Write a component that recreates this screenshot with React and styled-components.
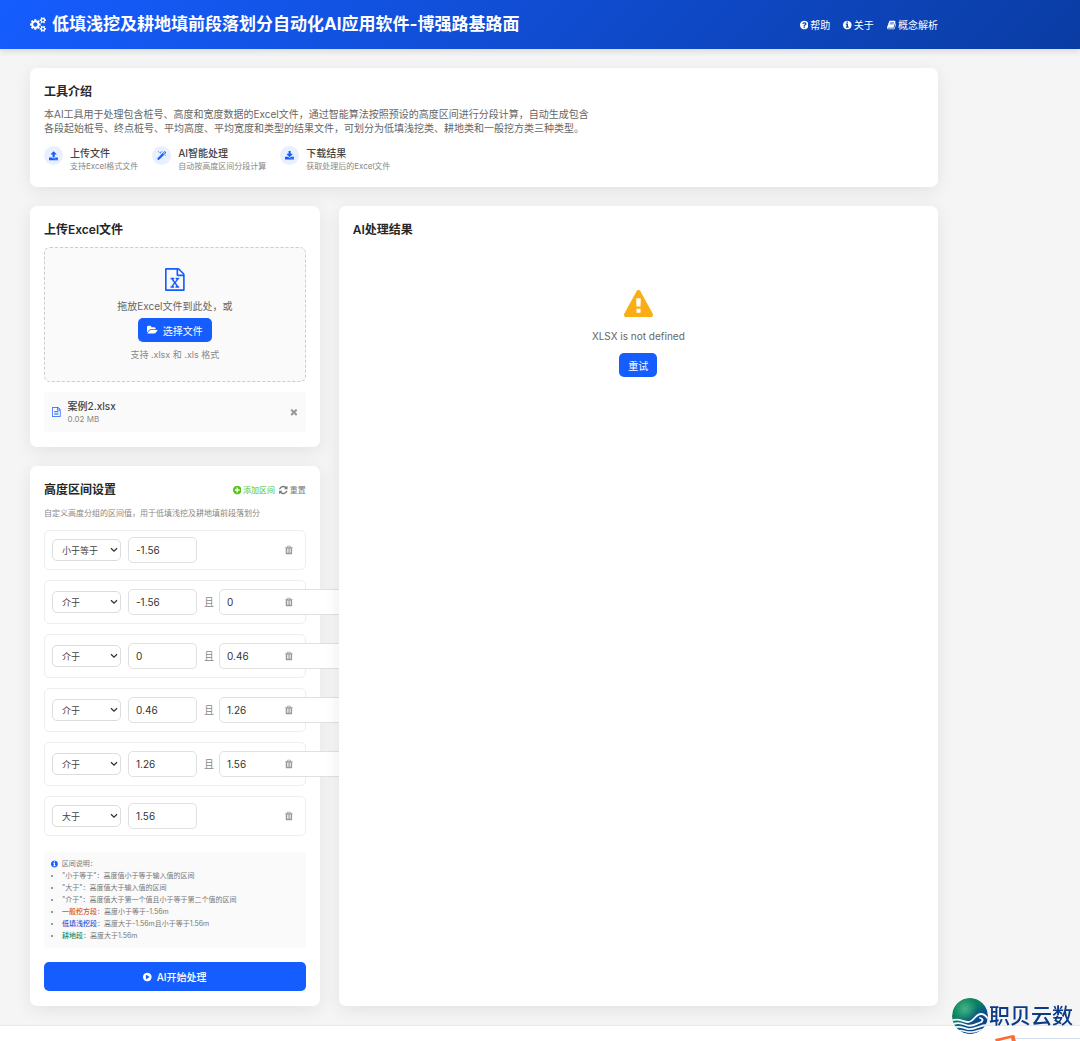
import React, { useState } from "react";
import styled, { createGlobalStyle } from "styled-components";

// アイコンのパス（viewBoxの左端, 幅, パス）
const DISC =
  "q0 209-103 385.5t-279.5 279.5-385.5 103-385.5-103-279.5-279.5-103-385.5 103-385.5 279.5-279.5 385.5-103 385.5 103 279.5 279.5 103 385.5z";
const FILE =
  "M1596 380q28 28 48 76t20 88v1152q0 40-28 68t-68 28h-1344q-40 0-68-28t-28-68v-1600q0-40 28-68t68-28h896q40 0 88 20t76 48zm-444-244v376h376q-10-29-22-41l-313-313q-12-12-41-22zm384 1528v-1024h-416q-40 0-68-28t-28-68v-416h-768v1536h1280z";
const SMALL_COG =
  "v140q0 16-149 31-12 27-30 52 51 113 51 138 0 4-4 7-122 71-124 71-8 0-46-47t-52-68q-20 2-30 2t-30-2q-14 21-52 68t-46 47q-2 0-124-71-4-3-4-7 0-25 51-138-18-25-30-52-149-15-149-31v-140q0-16 149-31 13-29 30-52-51-113-51-138 0-4 4-7 4-2 35-20t59-34 30-16q8 0 46 46.5t52 67.5q20-2 30-2t30 2q51-71 92-112l6-2q4 0 124 70 4 3 4 7 0 25-51 138 17 23 30 52 149 15 149 31z";

const ICONS = {
  cogs: [
    -64,
    1920,
    "M832 896q0-106-75-181t-181-75-181 75-75 181 75 181 181 75 181-75 75-181zm768 512q0-52-38-90t-90-38-90 38-38 90q0 53 37.5 90.5t90.5 37.5 90.5-37.5 37.5-90.5zm0-1024q0-52-38-90t-90-38-90 38-38 90q0 53 37.5 90.5t90.5 37.5 90.5-37.5 37.5-90.5zm-384 421v185q0 10-7 19.5t-16 10.5l-155 24q-11 35-32 76 34 48 90 115 7 11 7 20 0 12-7 19-23 30-82.5 89.5t-78.5 59.5q-11 0-21-7l-115-90q-37 19-77 31-11 108-23 155-7 24-30 24h-186q-11 0-20-7.5t-10-17.5l-23-153q-34-10-75-31l-118 89q-7 7-20 7-11 0-21-8-144-133-144-160 0-9 7-19 10-14 41-53t47-61q-23-44-35-82l-152-24q-10-1-17-9.5t-7-19.5v-185q0-10 7-19.5t16-10.5l155-24q11-35 32-76-34-48-90-115-7-11-7-20 0-12 7-20 22-30 82-89t79-59q11 0 21 7l115 90q34-18 77-32 11-108 23-154 7-24 30-24h186q11 0 20 7.5t10 17.5l23 153q34 10 75 31l118-89q8-7 20-7 11 0 21 8 144 133 144 160 0 8-7 19-12 16-42 54t-45 60q23 48 34 82l152 23q10 2 17 10.5t7 19.5zm640 533" +
      SMALL_COG +
      "m0-1024" +
      SMALL_COG,
  ],
  question: [
    128,
    1536,
    "M1024 1376v-192q0-14-9-23t-23-9h-192q-14 0-23 9t-9 23v192q0 14 9 23t23 9h192q14 0 23-9t9-23zm256-672q0-88-55.5-163t-138.5-116-170-41q-243 0-371 213-15 24 8 42l132 100q7 6 19 6 16 0 25-12 53-68 86-92 34-24 86-24 48 0 85.5 26t37.5 59q0 38-20 61t-68 45q-63 28-115.5 86.5t-52.5 125.5v36q0 14 9 23t23 9h192q14 0 23-9t9-23q0-19 21.5-49.5t54.5-49.5q32-18 49-28.5t46-35 44.5-48 28-60.5 12.5-81zm384 192" +
      DISC,
  ],
  info: [
    128,
    1536,
    "M1152 1376v-160q0-14-9-23t-23-9h-96v-512q0-14-9-23t-23-9h-320q-14 0-23 9t-9 23v160q0 14 9 23t23 9h96v320h-96q-14 0-23 9t-9 23v160q0 14 9 23t23 9h448q14 0 23-9t9-23zm-128-896v-160q0-14-9-23t-23-9h-192q-14 0-23 9t-9 23v160q0 14 9 23t23 9h192q14 0 23-9t9-23zm640 416" +
      DISC,
  ],
  plus: [
    128,
    1536,
    "M1344 960v-128q0-26-19-45t-45-19h-256v-256q0-26-19-45t-45-19h-128q-26 0-45 19t-19 45v256h-256q-26 0-45 19t-19 45v128q0 26 19 45t45 19h256v256q0 26 19 45t45 19h128q26 0 45-19t19-45v-256h256q26 0 45-19t19-45zm320-64" +
      DISC,
  ],
  play: [
    128,
    1536,
    "M896 128q209 0 385.5 103t279.5 279.5 103 385.5-103 385.5-279.5 279.5-385.5 103-385.5-103-279.5-279.5-103-385.5 103-385.5 279.5-279.5 385.5-103zm384 823q32-18 32-55t-32-55l-544-320q-31-19-64-1-32 19-32 56v640q0 37 32 56 16 8 32 8 17 0 32-9z",
  ],
  book: [
    64,
    1664,
    "M1703 478q40 57 18 129l-275 906q-19 64-76.5 107.5t-122.5 43.5h-923q-77 0-148.5-53.5t-99.5-131.5q-24-67-2-127 0-4 3-27t4-37q1-8-3-21.5t-3-19.5q2-11 8-21t16.5-23.5 16.5-23.5q23-38 45-91.5t30-91.5q3-10 .5-30t-.5-28q3-11 17-28t17-23q21-36 42-92t25-90q1-9-2.5-32t.5-28q4-13 22-30.5t22-22.5q19-26 42.5-84.5t27.5-96.5q1-8-3-25.5t-2-26.5q2-8 9-18t18-23 17-21q8-12 16.5-30.5t15-35 16-36 19.5-32 26.5-23.5 36-11.5 47.5 5.5l-1 3q38-9 51-9h761q74 0 114 56t18 130l-274 906q-36 119-71.5 153.5t-128.5 34.5h-869q-27 0-38 15-11 16-1 43 24 70 144 70h923q29 0 56-15.5t35-41.5l300-987q7-22 5-57 38 15 59 43zm-1064 2q-4 13 2 22.5t20 9.5h608q13 0 25.5-9.5t16.5-22.5l21-64q4-13-2-22.5t-20-9.5h-608q-13 0-25.5 9.5t-16.5 22.5zm-83 256q-4 13 2 22.5t20 9.5h608q13 0 25.5-9.5t16.5-22.5l21-64q4-13-2-22.5t-20-9.5h-608q-13 0-25.5 9.5t-16.5 22.5z",
  ],
  upload: [
    64,
    1664,
    "M1344 1472q0-26-19-45t-45-19-45 19-19 45 19 45 45 19 45-19 19-45zm256 0q0-26-19-45t-45-19-45 19-19 45 19 45 45 19 45-19 19-45zm128-224v320q0 40-28 68t-68 28h-1472q-40 0-68-28t-28-68v-320q0-40 28-68t68-28h427q21 56 70.5 92t110.5 36h256q61 0 110.5-36t70.5-92h427q40 0 68 28t28 68zm-325-648q-17 40-59 40h-256v448q0 26-19 45t-45 19h-256q-26 0-45-19t-19-45v-448h-256q-42 0-59-40-17-39 14-69l448-448q18-19 45-19t45 19l448 448q31 30 14 69z",
  ],
  magic: [
    64,
    1664,
    "M1254 581l293-293-107-107-293 293zm447-293q0 27-18 45l-1286 1286q-18 18-45 18t-45-18l-198-198q-18-18-18-45t18-45l1286-1286q18-18 45-18t45 18l198 198q18 18 18 45zm-1351-190l98 30-98 30-30 98-30-98-98-30 98-30 30-98zm350 162l196 60-196 60-60 196-60-196-196-60 196-60 60-196zm930 478l98 30-98 30-30 98-30-98-98-30 98-30 30-98zm-640-640l98 30-98 30-30 98-30-98-98-30 98-30 30-98z",
  ],
  download: [
    64,
    1664,
    "M1344 1344q0-26-19-45t-45-19-45 19-19 45 19 45 45 19 45-19 19-45zm256 0q0-26-19-45t-45-19-45 19-19 45 19 45 45 19 45-19 19-45zm128-224v320q0 40-28 68t-68 28h-1472q-40 0-68-28t-28-68v-320q0-40 28-68t68-28h465l135 136q58 56 136 56t136-56l136-136h464q40 0 68 28t28 68zm-325-569q17 41-14 70l-448 448q-18 19-45 19t-45-19l-448-448q-31-29-14-70 17-39 59-39h256v-448q0-26 19-45t45-19h256q26 0 45 19t19 45v448h256q42 0 59 39z",
  ],
  excel: [
    128,
    1536,
    FILE +
      "m-979-234v106h281v-106h-75l103-161q5-7 10-16.5t7.5-13.5 3.5-4h2q1 4 5 10 2 4 4.5 7.5t6 8 6.5 8.5l107 161h-76v106h291v-106h-68l-192-273 195-282h67v-107h-279v107h74l-103 159q-4 7-10 16.5t-9 13.5l-2 3h-2q-1-4-5-10-6-11-17-23l-106-159h76v-107h-290v107h68l189 272-194 283h-68z",
  ],
  fileText: [
    128,
    1536,
    FILE +
      "m-1024-864q0-14 9-23t23-9h704q14 0 23 9t9 23v64q0 14-9 23t-23 9h-704q-14 0-23-9t-9-23v-64zm736 224q14 0 23 9t9 23v64q0 14-9 23t-23 9h-704q-14 0-23-9t-9-23v-64q0-14 9-23t23-9h704zm0 256q14 0 23 9t9 23v64q0 14-9 23t-23 9h-704q-14 0-23-9t-9-23v-64q0-14 9-23t23-9h704z",
  ],
  folder: [
    -64,
    1920,
    "M1815 952q0 31-31 66l-336 396q-43 51-120.5 86.5t-143.5 35.5h-1088q-34 0-60.5-13t-26.5-43q0-31 31-66l336-396q43-51 120.5-86.5t143.5-35.5h1088q34 0 60.5 13t26.5 43zm-343-344v160h-832q-94 0-197 47.5t-164 119.5l-337 396-5 6q0-4-.5-12.5t-.5-12.5v-960q0-92 66-158t158-66h320q92 0 158 66t66 158v32h544q92 0 158 66t66 158z",
  ],
  times: [
    192,
    1408,
    "M1490 1322q0 40-28 68l-136 136q-28 28-68 28t-68-28l-294-294-294 294q-28 28-68 28t-68-28l-136-136q-28-28-28-68t28-68l294-294-294-294q-28-28-28-68t28-68l136-136q28-28 68-28t68 28l294 294 294-294q28-28 68-28t68 28l136 136q28 28 28 68t-28 68l-294 294 294 294q28 28 28 68z",
  ],
  refresh: [
    128,
    1536,
    "M1639 1056q0 5-1 7-64 268-268 434.5t-478 166.5q-146 0-282.5-55t-243.5-157l-129 129q-19 19-45 19t-45-19-19-45v-448q0-26 19-45t45-19h448q26 0 45 19t19 45-19 45l-137 137q71 66 161 102t187 36q134 0 250-65t186-179q11-17 53-117 8-23 30-23h192q13 0 22.5 9.5t9.5 22.5zm25-800v448q0 26-19 45t-45 19h-448q-26 0-45-19t-19-45 19-45l138-138q-148-137-349-137-134 0-250 65t-186 179q-11 17-53 117-8 23-30 23h-199q-13 0-22.5-9.5t-9.5-22.5v-7q65-268 270-434.5t480-166.5q146 0 284 55.5t245 156.5l130-129q19-19 45-19t45 19 19 45z",
  ],
  trash: [
    192,
    1408,
    "M704 1376v-704q0-14-9-23t-23-9h-64q-14 0-23 9t-9 23v704q0 14 9 23t23 9h64q14 0 23-9t9-23zm256 0v-704q0-14-9-23t-23-9h-64q-14 0-23 9t-9 23v704q0 14 9 23t23 9h64q14 0 23-9t9-23zm256 0v-704q0-14-9-23t-23-9h-64q-14 0-23 9t-9 23v704q0 14 9 23t23 9h64q14 0 23-9t9-23zm-544-992h448l-48-117q-7-9-17-11h-317q-10 2-17 11zm928 32v64q0 14-9 23t-23 9h-96v948q0 83-47 143.5t-113 60.5h-832q-66 0-113-58.5t-47-141.5v-952h-96q-14 0-23-9t-9-23v-64q0-14 9-23t23-9h309l70-167q15-37 54-63t79-26h320q40 0 79 26t54 63l70 167h309q14 0 23 9t9 23z",
  ],
  warning: [
    0,
    1792,
    "M1024 1375v-190q0-14-9.5-23.5t-22.5-9.5h-192q-13 0-22.5 9.5t-9.5 23.5v190q0 14 9.5 23.5t22.5 9.5h192q13 0 22.5-9.5t9.5-23.5zm-2-374l18-459q0-12-10-19-13-11-24-11h-220q-11 0-24 11-10 7-10 21l17 457q0 10 10 16.5t24 6.5h185q14 0 23.5-6.5t10.5-16.5zm-14-934l768 1408q35 63-2 126-17 29-46.5 46t-63.5 17h-1536q-34 0-63.5-17t-46.5-46q-37-63-2-126l768-1408q17-31 47-49t65-18 65 18 47 49z",
  ],
};

const Icon = ({ name, size = 10 }) => {
  const [left, width, path] = ICONS[name];
  return (
    <StyleIcon
      viewBox={`${left} 0 ${width} 1792`}
      width={(size * width) / 1792}
      height={size}
      aria-hidden="true"
    >
      <path d={path} />
    </StyleIcon>
  );
};

const features = [
  { icon: "upload", title: "上传文件", text: "支持Excel格式文件" },
  { icon: "magic", title: "AI智能处理", text: "自动按高度区间分段计算" },
  { icon: "download", title: "下载结果", text: "获取处理后的Excel文件" },
];

const defaultRanges = [
  { id: 1, type: "lte", value: "-1.56" },
  { id: 2, type: "between", value: "-1.56", value2: "0" },
  { id: 3, type: "between", value: "0", value2: "0.46" },
  { id: 4, type: "between", value: "0.46", value2: "1.26" },
  { id: 5, type: "between", value: "1.26", value2: "1.56" },
  { id: 6, type: "gt", value: "1.56" },
];

const RangeItem = ({ range, onChange, onDelete }) => {
  const edit = (key) => (e) => onChange({ ...range, [key]: e.target.value });
  const isBetween = range.type === "between";
  return (
    <StyleRange $tall={isBetween}>
      <StyleSelectBox>
        <StyleSelect aria-label="区间类型" value={range.type} onChange={edit("type")}>
          <option value="lte">小于等于</option>
          <option value="gt">大于</option>
          <option value="between">介于</option>
        </StyleSelect>
        <svg width="8" height="6" viewBox="0 0 8 6" aria-hidden="true">
          <path d="M1 1.2 L4 4.2 L7 1.2" fill="none" stroke="#333" strokeWidth="1.3" />
        </svg>
      </StyleSelectBox>
      <StyleInput aria-label="高度值" value={range.value} onChange={edit("value")} />
      <StyleSecond>
        {isBetween && (
          <>
            <span>且</span>
            <StyleInput
              $wide
              aria-label="第二个高度值"
              value={range.value2 || ""}
              onChange={edit("value2")}
            />
          </>
        )}
      </StyleSecond>
      <StyleIconButton aria-label="删除区间" onClick={onDelete}>
        <Icon name="trash" />
      </StyleIconButton>
    </StyleRange>
  );
};

const CompanyLogo = () => (
  <StyleLogo>
    <svg width="38" height="38" viewBox="0 0 38 38" aria-hidden="true">
      <defs>
        <linearGradient id="globe" x1="0.1" y1="0" x2="0.8" y2="1">
          <stop offset="0" stopColor="#0a8a50" />
          <stop offset="0.4" stopColor="#0b7f62" />
          <stop offset="0.65" stopColor="#0a4f8a" />
          <stop offset="1" stopColor="#0b3a86" />
        </linearGradient>
        <radialGradient id="shine" cx="0.36" cy="0.3" r="0.34">
          <stop offset="0" stopColor="#5cc79a" stopOpacity="0.7" />
          <stop offset="1" stopColor="#5cc79a" stopOpacity="0" />
        </radialGradient>
        <clipPath id="disc">
          <circle cx="19" cy="19" r="18" />
        </clipPath>
      </defs>
      <g clipPath="url(#disc)">
        <circle cx="19" cy="19" r="18" fill="url(#globe)" />
        <circle cx="19" cy="19" r="18" fill="url(#shine)" />
        <g fill="none" stroke="#f4f8fa" strokeLinecap="round">
          <path
            d="M0 24 C7 20 12 25 17 25 C23 25 24 17 30 17 C34 17 36 20 38 23"
            strokeWidth="1.8"
          />
          <path
            d="M29 21 C33 22 32 25 28 26 C23 28 20 30 15 28 C9 26 6 25 0 28"
            strokeWidth="1.8"
          />
          <path d="M2 31 C8 28 12 31 17 32 C24 33 28 28 37 28" strokeWidth="1.8" />
          <path d="M6 34 C11 32 15 36 21 35 C26 35 29 32 34 32" strokeWidth="1.6" />
        </g>
      </g>
    </svg>
    <span>职贝云数</span>
  </StyleLogo>
);

const App = () => {
  const [ranges, setRanges] = useState(defaultRanges);

  const addRange = () =>
    setRanges([...ranges, { id: Date.now(), type: "lte", value: "0" }]);

  return (
    <StylePage>
      <GlobalStyle />
      <StyleHeader>
        <StyleHeaderInner>
          <StyleBrand>
            <Icon name="cogs" size={15} />
            低填浅挖及耕地填前段落划分自动化AI应用软件-博强路基路面
          </StyleBrand>
          <StyleNav>
            <a href="#help">
              <Icon name="question" />
              帮助
            </a>
            <a href="#about">
              <Icon name="info" />
              关于
            </a>
            <a href="#concept">
              <Icon name="book" />
              概念解析
            </a>
          </StyleNav>
        </StyleHeaderInner>
      </StyleHeader>

      <StyleMain>
        <StyleCard>
          <StyleTitle>工具介绍</StyleTitle>
          <StyleIntro>
            本AI工具用于处理包含桩号、高度和宽度数据的Excel文件，通过智能算法按照预设的高度区间进行分段计算，自动生成包含各段起始桩号、终点桩号、平均高度、平均宽度和类型的结果文件，可划分为低填浅挖类、耕地类和一般挖方类三种类型。
          </StyleIntro>
          <StyleFeatures>
            {features.map((f) => (
              <StyleFeature key={f.title}>
                <StyleBubble>
                  <Icon name={f.icon} />
                </StyleBubble>
                <div>
                  <StyleName>{f.title}</StyleName>
                  <StyleSmall>{f.text}</StyleSmall>
                </div>
              </StyleFeature>
            ))}
          </StyleFeatures>
        </StyleCard>

        <StyleColumns>
          <StyleSide>
            <StyleCard>
              <StyleTitle>上传Excel文件</StyleTitle>
              <StyleDrop>
                <Icon name="excel" size={23} />
                <StyleDropText>拖放Excel文件到此处，或</StyleDropText>
                <StyleButton>
                  <Icon name="folder" />
                  选择文件
                </StyleButton>
                <StyleHint>支持 .xlsx 和 .xls 格式</StyleHint>
              </StyleDrop>
              <StyleFile>
                <Icon name="fileText" />
                <StyleFileInfo>
                  <StyleName>案例2.xlsx</StyleName>
                  <StyleSmall>0.02 MB</StyleSmall>
                </StyleFileInfo>
                <StyleIconButton aria-label="移除文件">
                  <Icon name="times" />
                </StyleIconButton>
              </StyleFile>
            </StyleCard>

            <StyleCard>
              <StyleTitleRow>
                <StyleTitle>高度区间设置</StyleTitle>
                <StyleActions>
                  <StyleTextButton $color="#52c41a" onClick={addRange}>
                    <Icon name="plus" />
                    添加区间
                  </StyleTextButton>
                  <StyleTextButton
                    $color="#7a7a7a"
                    onClick={() => setRanges(defaultRanges)}
                  >
                    <Icon name="refresh" />
                    重置
                  </StyleTextButton>
                </StyleActions>
              </StyleTitleRow>
              <StyleSmall>
                自定义高度分组的区间值，用于低填浅挖及耕地填前段落划分
              </StyleSmall>
              <StyleRanges>
                {ranges.map((range) => (
                  <RangeItem
                    key={range.id}
                    range={range}
                    onChange={(next) =>
                      setRanges(ranges.map((r) => (r.id === next.id ? next : r)))
                    }
                    onDelete={() =>
                      setRanges(ranges.filter((r) => r.id !== range.id))
                    }
                  />
                ))}
              </StyleRanges>
              <StyleNote>
                <StyleNoteTitle>
                  <Icon name="info" size={8} />
                  区间说明：
                </StyleNoteTitle>
                <ul>
                  <li>"小于等于"：高度值小于等于输入值的区间</li>
                  <li>"大于"：高度值大于输入值的区间</li>
                  <li>"介于"：高度值大于第一个值且小于等于第二个值的区间</li>
                  <li>
                    <StyleTag $color="#d4532b">一般挖方段</StyleTag>：高度小于等于-1.56m
                  </li>
                  <li>
                    <StyleTag $color="#3a55d6">低填浅挖段</StyleTag>
                    ：高度大于-1.56m且小于等于1.56m
                  </li>
                  <li>
                    <StyleTag $color="#2a8a5a">耕地段</StyleTag>：高度大于1.56m
                  </li>
                </ul>
              </StyleNote>
              <StyleSubmit>
                <Icon name="play" />
                AI开始处理
              </StyleSubmit>
            </StyleCard>
          </StyleSide>

          <StyleResult>
            <StyleTitle>AI处理结果</StyleTitle>
            <StyleError>
              <Icon name="warning" size={29} />
              <p>XLSX is not defined</p>
              <StyleButton>重试</StyleButton>
            </StyleError>
          </StyleResult>
        </StyleColumns>
      </StyleMain>

      <StyleFooter />
      <CompanyLogo />
      <StyleWidget aria-hidden="true">
        <svg width="24" height="8" viewBox="0 0 24 8">
          <path d="M1 5 L19 1 Q21 1 21 3 L22 8 H2 Z" fill="#ff6b35" />
          <path d="M5 7 L17 4 L18 8 H5 Z" fill="#fff" />
        </svg>
      </StyleWidget>
    </StylePage>
  );
};

const GlobalStyle = createGlobalStyle`
  * {
    box-sizing: border-box;
  }
  body {
    margin: 0;
    background: #f5f5f5;
    color: #262626;
    font-family: Inter, "Noto Sans CJK SC", sans-serif;
    font-size: 10px;
    line-height: 14px;
  }
  button, input, select {
    margin: 0;
    font-family: inherit;
  }
  p, ul {
    margin: 0;
    padding: 0;
  }
`;

const StyleIcon = styled.svg`
  display: block;
  flex: none;
  fill: currentColor;
`;

const StylePage = styled.div`
  display: flex;
  flex-direction: column;
  min-height: 100vh;
`;

const StyleHeader = styled.header`
  padding: 12px 0;
  background: linear-gradient(135deg, #165dff 0%, #0a3ca3 100%);
  box-shadow: 0 3px 6px rgba(0, 0, 0, 0.1);
  color: #fff;
`;

const StyleHeaderInner = styled.div`
  display: flex;
  align-items: center;
  justify-content: space-between;
  max-width: 968px;
  padding: 0 30px;
`;

const StyleBrand = styled.h1`
  display: flex;
  align-items: center;
  gap: 6px;
  margin: 0;
  font-size: 17px;
  font-weight: 700;
  line-height: 25px;
`;

const StyleNav = styled.nav`
  display: flex;
  gap: 13px;

  a {
    display: flex;
    align-items: center;
    gap: 2px;
    color: inherit;
    text-decoration: none;
  }
`;

const StyleMain = styled.main`
  display: flex;
  flex-direction: column;
  gap: 19px;
  max-width: 968px;
  padding: 19px 30px;
`;

const StyleCard = styled.section`
  padding: 15px 14px;
  border-radius: 7px;
  background: #fff;
  box-shadow: 0 4px 18px rgba(0, 0, 0, 0.08);
`;

const StyleTitle = styled.h2`
  margin: 0;
  font-size: 12px;
  font-weight: 600;
  line-height: 17px;
`;

const StyleIntro = styled.p`
  max-width: 550px;
  margin: 7px 0 11px;
  color: #666;
`;

const StyleFeatures = styled.div`
  display: flex;
  gap: 14px;
`;

const StyleFeature = styled.div`
  display: flex;
  align-items: flex-start;
  gap: 7px;
`;

const StyleBubble = styled.span`
  display: flex;
  align-items: center;
  justify-content: center;
  width: 19px;
  height: 19px;
  border-radius: 50%;
  background: #e8efff;
  color: #165dff;
`;

const StyleName = styled.p`
  color: #444;
  font-weight: 500;
`;

const StyleSmall = styled.p`
  color: #888;
  font-size: 8px;
  line-height: 12px;
`;

const StyleColumns = styled.div`
  display: grid;
  grid-template-columns: minmax(0, 29fr) minmax(0, 60fr);
  gap: 19px;
`;

const StyleSide = styled.div`
  display: flex;
  flex-direction: column;
  gap: 19px;
`;

// 左カラムからはみ出した入力欄より手前に出す
const StyleResult = styled(StyleCard)`
  position: relative;
  z-index: 2;
`;

const StyleDrop = styled.div`
  display: flex;
  flex-direction: column;
  align-items: center;
  margin: 9px 0 10px;
  padding: 20px 20px 19px;
  border: 1px dashed #ccc;
  border-radius: 6px;
  background: #fafafa;
  color: #165dff;
`;

const StyleDropText = styled.p`
  margin: 8px 0 5px;
  color: #666;
`;

const StyleHint = styled.p`
  margin-top: 6px;
  color: #888;
  font-size: 9px;
  line-height: 14px;
`;

const StyleButton = styled.button`
  display: flex;
  align-items: center;
  justify-content: center;
  gap: 5px;
  height: 24px;
  padding: 0 9px;
  border: 0;
  border-radius: 5px;
  background: #165dff;
  color: #fff;
  font-size: 10px;
  cursor: pointer;
`;

const StyleSubmit = styled(StyleButton)`
  width: 100%;
  height: 29px;
  font-weight: 500;
`;

const StyleFile = styled.div`
  display: flex;
  align-items: center;
  gap: 7px;
  padding: 7px 3px 7px 8px;
  border-radius: 4px;
  background: #fafafa;
  color: #165dff;
`;

const StyleFileInfo = styled.div`
  flex: 1;
`;

const StyleIconButton = styled.button`
  position: relative;
  z-index: 1;
  display: flex;
  align-items: center;
  justify-content: center;
  width: 18px;
  height: 18px;
  padding: 0;
  border: 0;
  background: none;
  color: #999;
  cursor: pointer;
`;

const StyleTitleRow = styled.div`
  display: flex;
  align-items: center;
  justify-content: space-between;
  margin-bottom: 9px;
`;

const StyleActions = styled.div`
  display: flex;
  gap: 4px;
`;

const StyleTextButton = styled.button`
  display: flex;
  align-items: center;
  gap: 2px;
  padding: 0;
  border: 0;
  background: none;
  color: ${(props) => props.$color};
  font-size: 8px;
  line-height: 12px;
  cursor: pointer;
`;

const StyleRanges = styled.div`
  display: flex;
  flex-direction: column;
  gap: 10px;
  margin: 11px 0 16px;
`;

const StyleRange = styled.div`
  display: flex;
  align-items: center;
  gap: 7px;
  height: ${(props) => (props.$tall ? "44px" : "40px")};
  padding: 0 7px;
  border: 1px solid #eee;
  border-radius: 5px;
`;

const StyleSelectBox = styled.div`
  position: relative;
  flex: none;

  svg {
    position: absolute;
    top: 8px;
    right: 3px;
    pointer-events: none;
  }
`;

const StyleSelect = styled.select`
  display: block;
  width: 69px;
  height: 22px;
  padding: 0 12px 0 9px;
  border: 1px solid #ddd;
  border-radius: 5px;
  background: #fff;
  color: #444;
  font-size: 9px;
  appearance: none;
`;

const StyleInput = styled.input`
  flex: none;
  width: ${(props) => (props.$wide ? "140px" : "69px")};
  height: 26px;
  padding: 0 7px;
  border: 1px solid #e0e0e0;
  border-radius: 5px;
  background: #fff;
  color: #333;
  font-size: 10px;
`;

const StyleSecond = styled.div`
  display: flex;
  flex: 1;
  align-items: center;
  gap: 5px;
  min-width: 0;
  color: #888;
`;

const StyleNote = styled.div`
  margin-bottom: 14px;
  padding: 6px 7px;
  border-radius: 4px;
  background: #fafafa;
  color: #777;
  font-size: 7px;
  line-height: 12px;

  ul {
    padding-left: 11px;
  }
`;

const StyleNoteTitle = styled.p`
  display: flex;
  align-items: center;
  gap: 4px;

  svg {
    color: #165dff;
  }
`;

const StyleTag = styled.span`
  color: ${(props) => props.$color};
  font-weight: 500;
`;

const StyleError = styled.div`
  display: flex;
  flex-direction: column;
  align-items: center;
  gap: 10px;
  padding-top: 52px;
  color: #faad14;

  p {
    color: #666;
  }
`;

const StyleFooter = styled.footer`
  flex: 1;
  min-height: 15px;
  border-top: 1px solid #e8e8e8;
  background: #fff;
`;

const StyleLogo = styled.div`
  position: fixed;
  right: 7px;
  bottom: 6px;
  z-index: 10;
  display: flex;
  align-items: center;
  color: #0b3a86;
  font-size: 21px;
  font-weight: 500;
  line-height: 38px;
`;

const StyleWidget = styled.div`
  position: fixed;
  right: 0;
  bottom: 0;
  z-index: 10;
  width: 86px;
  height: 7px;
  overflow: hidden;

  svg {
    display: block;
  }

  &::after {
    content: "";
    position: absolute;
    top: 4px;
    right: 0;
    left: 22px;
    height: 3px;
    border-top: 1px solid #d5dff0;
    background: #fff;
  }
`;

export default App;
